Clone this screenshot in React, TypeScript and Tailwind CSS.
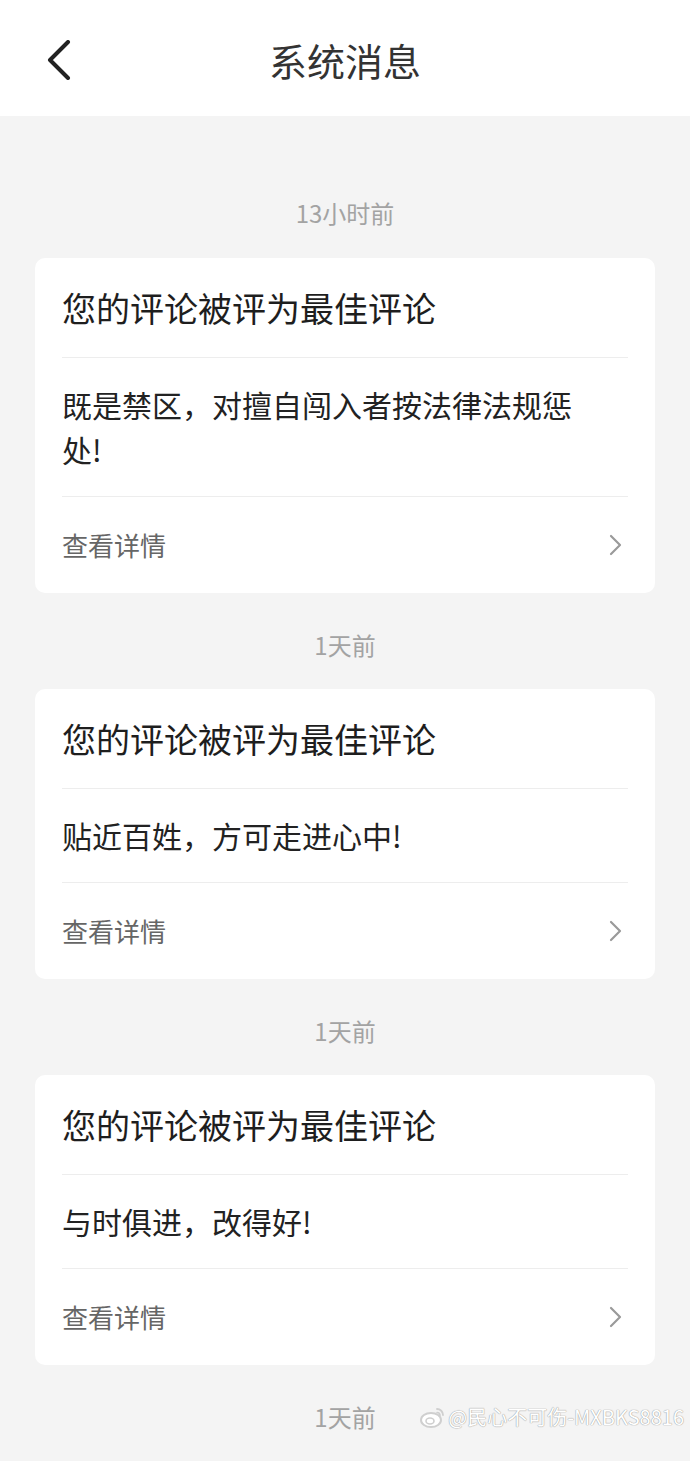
const messages = [
  { time: "13小时前", body: "既是禁区，对擅自闯入者按法律法规惩处!" },
  { time: "1天前", body: "贴近百姓，方可走进心中!" },
  { time: "1天前", body: "与时俱进，改得好!" },
];

function BackIcon() {
  return (
    <svg width="26" height="40" viewBox="0 0 26 40" fill="none">
      <polyline
        points="22,2 4,20 22,38"
        stroke="#222"
        strokeWidth="4"
        strokeLinecap="round"
        strokeLinejoin="round"
      />
    </svg>
  );
}

function ChevronRight() {
  return (
    <svg width="14" height="22" viewBox="0 0 14 22" fill="none">
      <polyline
        points="2,2 11,11 2,20"
        stroke="#9a9a9a"
        strokeWidth="2.2"
        strokeLinecap="round"
        strokeLinejoin="round"
      />
    </svg>
  );
}

function WeiboMark() {
  return (
    <svg width="26" height="22" viewBox="0 0 26 22" fill="none">
      <ellipse cx="11" cy="14" rx="10" ry="7" stroke="#cfcfcf" strokeWidth="2" fill="#fff" />
      <ellipse cx="10" cy="15" rx="4" ry="3" stroke="#cfcfcf" strokeWidth="1.6" fill="#fff" />
      <path d="M17 3 a6 6 0 0 1 6 6" stroke="#cfcfcf" strokeWidth="1.8" strokeLinecap="round" />
      <path d="M17 6.5 a3 3 0 0 1 3 3" stroke="#cfcfcf" strokeWidth="1.6" strokeLinecap="round" />
    </svg>
  );
}

function MessageCard({ body }: { body: string }) {
  return (
    <div className="mx-[35px] rounded-[10px] bg-white px-[27px]">
      <div className="flex h-[100px] items-center border-b border-[#ededed] text-[34px] leading-none text-[#1e1e1e]">
        您的评论被评为最佳评论
      </div>
      <div className="border-b border-[#ededed] pt-[24px] pb-[24px]">
        <p className="max-w-[520px] text-[30px] leading-[45px] text-[#222]">{body}</p>
      </div>
      <div className="flex h-[96px] items-center justify-between">
        <span className="text-[26px] leading-none text-[#666]">查看详情</span>
        <span className="mr-[5px]">
          <ChevronRight />
        </span>
      </div>
    </div>
  );
}

export default function App() {
  return (
    <div
      className="relative min-h-[1461px] w-[690px] overflow-hidden bg-[#f4f4f4]"
      style={{ fontFamily: '"Noto Sans CJK SC", "Noto Sans", sans-serif' }}
    >
      {/* HEADER */}
      <div className="relative flex h-[116px] items-center justify-center bg-white">
        <div className="absolute left-[46px] top-[40px]">
          <BackIcon />
        </div>
        <h1 className="pt-[4px] text-[38px] leading-none text-[#333]">系统消息</h1>
      </div>

      {/* LIST */}
      <div className="pt-[82px]">
        {messages.map((m, i) => (
          <div key={i}>
            <div
              className={
                i === 0
                  ? "mb-[30px] text-center text-[24px] leading-[30px] text-[#a3a3a3]"
                  : "mt-[37px] mb-[29px] text-center text-[24px] leading-[30px] text-[#a3a3a3]"
              }
            >
              {m.time}
            </div>
            <MessageCard body={m.body} />
          </div>
        ))}
        <div className="mt-[37px] mb-[28px] text-center text-[24px] leading-[30px] text-[#a3a3a3]">
          1天前
        </div>
      </div>

      {/* WATERMARK */}
      <div className="absolute right-[6px] top-[1406px] flex items-center gap-[2px]">
        <WeiboMark />
        <span
          className="text-[20px] leading-none text-white"
          style={{ textShadow: "0 0 1px #9a9a9a, 0 0 1px #9a9a9a" }}
        >
          @民心不可伤-MXBKS8816
        </span>
      </div>
    </div>
  );
}
